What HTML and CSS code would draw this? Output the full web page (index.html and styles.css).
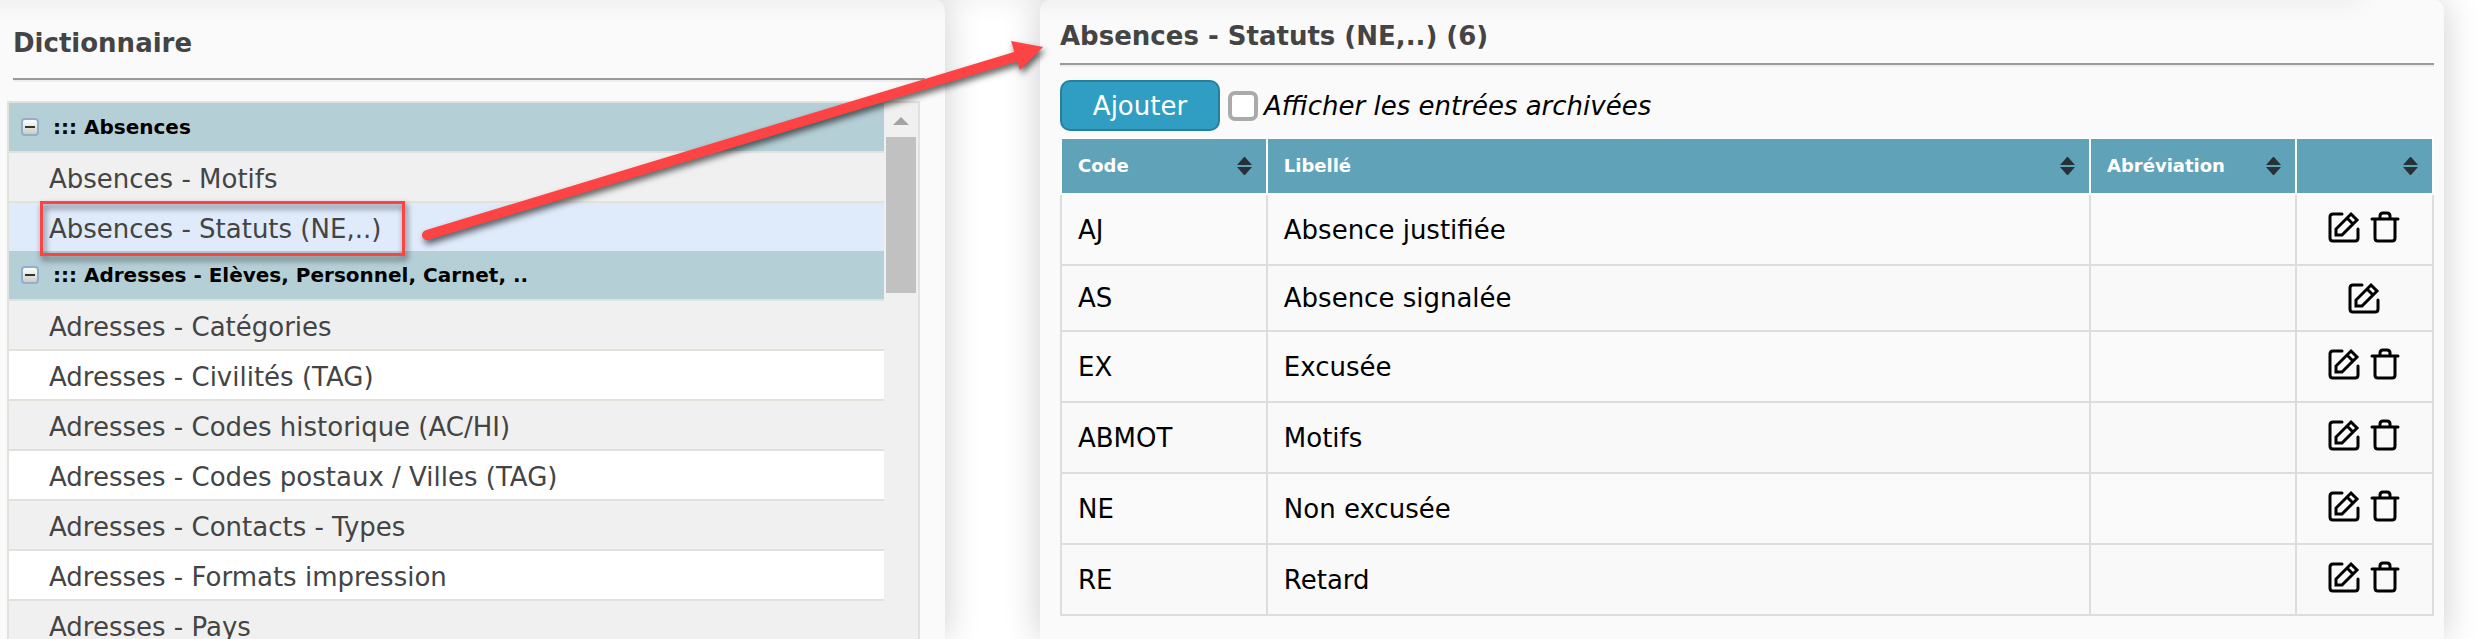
FILE: index.html
```html
<!DOCTYPE html>
<html lang="fr">
<head>
    <meta charset="UTF-8">
    <meta name="viewport" content="width=device-width, initial-scale=1.0">
    <title>Dictionnaire</title>
    <link rel="stylesheet" href="styles.css">
</head>
<body>

<!-- icons used in the tables -->
<svg class="sprite" aria-hidden="true">
    <symbol id="icon-edit" viewBox="0 0 32 32">
        <path d="M14 3H5Q2 3 2 6V27Q2 30 5 30H27Q30 30 30 27V18" fill="none" stroke="#000" stroke-width="3" stroke-linecap="round"/>
        <path d="M23 3L29 9L14 24H8V18Z M19 7L25 13" fill="none" stroke="#000" stroke-width="3"/>
    </symbol>
    <symbol id="icon-trash" viewBox="-1 0 32 32">
        <path d="M3 8H29M6 8V27Q6 30 9 30H23Q26 30 26 27V8M11 8V5Q11 2 14 2H18Q21 2 21 5V8" fill="none" stroke="#000" stroke-width="3" stroke-linecap="round"/>
    </symbol>
    <symbol id="icon-sort" viewBox="0 0 15 18">
        <path d="M7 0H8L15 8H0ZM0 10H15L8 18H7Z" fill="#263238"/>
    </symbol>
</svg>

<div class="page">
    <div class="panel panel-left">
        <h1>Dictionnaire</h1>
        <hr>
        <div class="tree">
            <ul>
                <li class="group"><button class="toggle" aria-label="Réduire"></button>::: Absences</li>
                <li><a href="#">Absences - Motifs</a></li>
                <li class="selected"><a href="#">Absences - Statuts (NE,..)</a></li>
                <li class="group"><button class="toggle" aria-label="Réduire"></button>::: Adresses - Elèves, Personnel, Carnet, ..</li>
                <li><a href="#">Adresses - Catégories</a></li>
                <li class="odd"><a href="#">Adresses - Civilités (TAG)</a></li>
                <li><a href="#">Adresses - Codes historique (AC/HI)</a></li>
                <li class="odd"><a href="#">Adresses - Codes postaux / Villes (TAG)</a></li>
                <li><a href="#">Adresses - Contacts - Types</a></li>
                <li class="odd"><a href="#">Adresses - Formats impression</a></li>
                <li><a href="#">Adresses - Pays</a></li>
            </ul>
            <div class="scrollbar">
                <div class="arrow-up"></div>
                <div class="thumb"></div>
            </div>
        </div>
    </div>

    <div class="panel panel-right">
        <h1>Absences - Statuts (NE,..) (6)</h1>
        <hr>
        <div class="toolbar">
            <button class="add">Ajouter</button>
            <input type="checkbox" id="archived">
            <label for="archived">Afficher les entrées archivées</label>
        </div>
        <table>
            <colgroup>
                <col class="col-code">
                <col class="col-label">
                <col class="col-abbr">
                <col class="col-actions">
            </colgroup>
            <thead>
                <tr>
                    <th><div>Code<svg><use href="#icon-sort"/></svg></div></th>
                    <th><div>Libellé<svg><use href="#icon-sort"/></svg></div></th>
                    <th><div>Abréviation<svg><use href="#icon-sort"/></svg></div></th>
                    <th><div><svg><use href="#icon-sort"/></svg></div></th>
                </tr>
            </thead>
            <tbody>
                <tr>
                    <td>AJ</td>
                    <td>Absence justifiée</td>
                    <td></td>
                    <td><div class="actions">
                        <button aria-label="Modifier"><svg><use href="#icon-edit"/></svg></button>
                        <button class="delete" aria-label="Supprimer"><svg><use href="#icon-trash"/></svg></button>
                    </div></td>
                </tr>
                <tr>
                    <td>AS</td>
                    <td>Absence signalée</td>
                    <td></td>
                    <td><div class="actions">
                        <button aria-label="Modifier"><svg><use href="#icon-edit"/></svg></button>
                    </div></td>
                </tr>
                <tr>
                    <td>EX</td>
                    <td>Excusée</td>
                    <td></td>
                    <td><div class="actions">
                        <button aria-label="Modifier"><svg><use href="#icon-edit"/></svg></button>
                        <button class="delete" aria-label="Supprimer"><svg><use href="#icon-trash"/></svg></button>
                    </div></td>
                </tr>
                <tr>
                    <td>ABMOT</td>
                    <td>Motifs</td>
                    <td></td>
                    <td><div class="actions">
                        <button aria-label="Modifier"><svg><use href="#icon-edit"/></svg></button>
                        <button class="delete" aria-label="Supprimer"><svg><use href="#icon-trash"/></svg></button>
                    </div></td>
                </tr>
                <tr>
                    <td>NE</td>
                    <td>Non excusée</td>
                    <td></td>
                    <td><div class="actions">
                        <button aria-label="Modifier"><svg><use href="#icon-edit"/></svg></button>
                        <button class="delete" aria-label="Supprimer"><svg><use href="#icon-trash"/></svg></button>
                    </div></td>
                </tr>
                <tr>
                    <td>RE</td>
                    <td>Retard</td>
                    <td></td>
                    <td><div class="actions">
                        <button aria-label="Modifier"><svg><use href="#icon-edit"/></svg></button>
                        <button class="delete" aria-label="Supprimer"><svg><use href="#icon-trash"/></svg></button>
                    </div></td>
                </tr>
            </tbody>
        </table>
    </div>
    <div class="topbar"></div>
</div>

<!-- red frame and arrow from the selected entry to its table -->
<svg class="annotation" viewBox="0 0 1100 300" aria-hidden="true">
    <rect x="41.5" y="202.5" width="362" height="52" fill="none" stroke="#fd4343" stroke-width="3"/>
    <path d="M427 235L1018 56" stroke="#fd4343" stroke-width="10" stroke-linecap="round"/>
    <path d="M1011 41L1043 47L1020 70Z" fill="#fd4343"/>
</svg>

</body>
</html>
```

FILE: styles.css
```css
* {
    box-sizing: border-box;
}
body {
    margin: 0;
    font-family: Verdana, "DejaVu Sans", sans-serif;
    font-size: 26px;
    line-height: 32px;
    background-color: #fff;
}
.sprite {
    display: none;
}
.page {
    position: relative;
    display: grid;
    grid-template-columns: 945fr 1404fr;
    grid-template-rows: 100%;
    gap: 95px;
    height: 100vh;
    padding-right: 46px;
    overflow: hidden;
}
.topbar {
    position: absolute;
    top: -20px;
    left: -20px;
    right: 130px;
    height: 20px;
    box-shadow: 0 0 26px rgba(0, 0, 0, 0.08);
}
.panel {
    min-width: 0;
    background-color: #fafafa;
    border-radius: 8px 8px 0 0 / 12px 12px 0 0;
    box-shadow: 0 0 36px rgba(0, 0, 0, 0.2);
}
.panel-left {
    display: flex;
    flex-direction: column;
    padding: 27px 20px 0 13px;
    border-top-left-radius: 0;
}
.panel-right {
    padding: 20px 10px 0 20px;
}
h1 {
    margin: 0;
    font-size: 26px;
    line-height: 32px;
    color: #444;
}
hr {
    width: 100%;
    margin: 19px 0;
    border: 0;
    border-top: 2px solid #999;
    border-bottom: 2px solid #eee;
}
.panel-right hr {
    margin: 11px 0 13px;
}

/* tree */
.tree {
    display: flex;
    flex: 1;
    min-height: 0;
    margin: 0 5px 0 -6px;
    border: 2px solid #e2e2dd;
    border-bottom: 0;
    background-color: #f0f0f0;
    overflow: hidden;
}
.tree ul {
    flex: 1;
    margin: 0;
    padding: 0;
    list-style: none;
}
.tree li {
    height: 50px;
    padding: 4px 0 0 40px;
    line-height: 44px;
    border-bottom: 2px solid #e2e2dd;
}
.tree li.odd {
    background-color: #fff;
}
.tree li.selected {
    height: 48px;
    border-bottom: 0;
    background-color: #dfeafa;
}
.tree li.group {
    display: flex;
    align-items: center;
    gap: 14px;
    padding: 0 0 0 12px;
    font-size: 20px;
    font-weight: bold;
    background-color: #b5cfd6;
}
.tree a {
    color: #444;
    text-decoration: none;
}
.toggle {
    display: flex;
    align-items: center;
    justify-content: center;
    width: 18px;
    height: 18px;
    padding: 0;
    border: 2px solid #8fb0cc;
    border-radius: 4px;
    background: linear-gradient(#fff, #d0ccc4);
}
.toggle::before {
    content: "";
    width: 10px;
    height: 2px;
    background-color: #333;
}
.scrollbar {
    width: 34px;
    padding: 14px 2px 0;
}
.arrow-up {
    width: 16px;
    height: 8px;
    margin: 0 auto 12px;
    background-color: #a3a3a3;
    clip-path: polygon(50% 0, 100% 100%, 0 100%);
}
.thumb {
    height: 156px;
    background-color: #c1c1c1;
}

/* toolbar */
.toolbar {
    display: flex;
    align-items: center;
    margin-bottom: 6px;
}
.add {
    width: 160px;
    height: 51px;
    padding: 0;
    border: 2px solid #25809d;
    border-radius: 10px;
    background-color: #2f9ec2;
    color: #fff;
    font-family: inherit;
    font-size: 26px;
}
#archived {
    appearance: none;
    width: 30px;
    height: 30px;
    margin: 0 6px 0 8px;
    border: 4px solid #aaa;
    border-radius: 7px;
    background-color: #fff;
}
.toolbar label {
    font-style: italic;
}

/* table */
table {
    width: 100%;
    table-layout: fixed;
    border-collapse: collapse;
}
.col-code,
.col-abbr {
    width: 15%;
}
.col-label {
    width: 60%;
}
.col-actions {
    width: 10%;
}
th {
    height: 56px;
    padding: 0 14px 0 16px;
    border: 2px solid #fff;
    background-color: #60a3b9;
    color: #fff;
    font-size: 18px;
    text-align: left;
}
th div {
    display: flex;
    align-items: center;
}
th svg {
    width: 15px;
    height: 18px;
    margin-left: auto;
}
td {
    padding: 16px;
    border: 2px solid #ddd;
}
tbody tr:nth-child(even) {
    background-color: #f9f9f9;
}
.actions {
    display: flex;
    justify-content: center;
    align-items: flex-start;
    gap: 8px;
}
.actions button {
    width: 32px;
    height: 32px;
    padding: 0;
    border: 0;
    background: none;
}
.actions .delete {
    height: 37px;
}
.actions svg {
    display: block;
    width: 32px;
    height: 32px;
}
.actions .delete svg {
    margin-bottom: 5px;
}

/* annotation drawn over the page */
.annotation {
    position: absolute;
    top: 0;
    left: 0;
    width: 1100px;
    height: 300px;
    filter: drop-shadow(2px 4px 3px rgba(0, 0, 0, 0.6));
    pointer-events: none;
}
```
